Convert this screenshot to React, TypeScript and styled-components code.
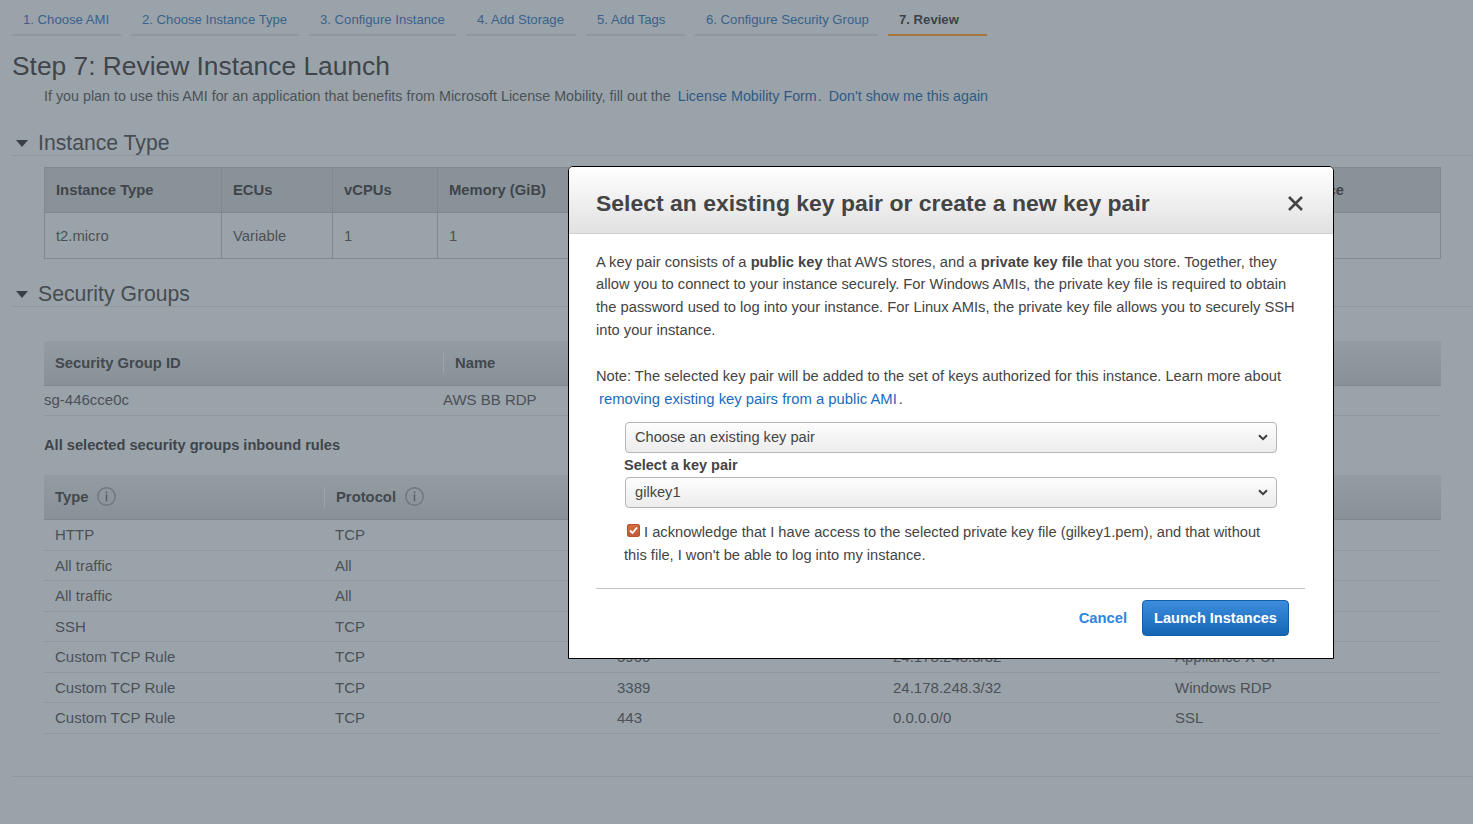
import React from "react";
import styled, { createGlobalStyle } from "styled-components";

const Global = createGlobalStyle`
  html, body { margin: 0; padding: 0; height: 100%; overflow: hidden; background: #9ba3aa; }
  body { font-family: "Liberation Sans", Arial, sans-serif; font-size: 15px; color: #42484d; }
  * { box-sizing: border-box; }
`;

const Page = styled.div`
  height: 824px;
  padding: 0 12px;
  overflow: hidden;
  background: #9ba3aa;
`;
const Tabs = styled.nav`
  display: flex;
  gap: 10px;
  height: 36px;
`;
const Tab = styled.div<{ $w: number; $active?: boolean }>`
  width: ${(p) => p.$w}px;
  height: 36px;
  padding: 12px 11px 0;
  font-size: 13.15px;
  line-height: 15px;
  white-space: nowrap;
  color: ${(p) => (p.$active ? "#3d4348" : "#38628a")};
  font-weight: ${(p) => (p.$active ? 700 : 400)};
  border-bottom: 2px solid ${(p) => (p.$active ? "#a8763c" : "#8f979e")};
`;
const Title = styled.h1`
  margin: 15px 0 0;
  font-size: 26.35px;
  line-height: 30px;
  font-weight: 400;
  color: #3f454a;
`;
const Notice = styled.p`
  margin: 7px 0 0 32px;
  font-size: 14.3px;
  line-height: 16px;
  color: #4b5258;
`;
const DimLink = styled.a<{ $ml?: number; $mr?: number }>`
  color: #2f5a84;
  margin-left: ${(p) => p.$ml ?? 0}px;
  margin-right: ${(p) => p.$mr ?? 0}px;
`;
const SectionHead = styled.div<{ $mt: number }>`
  display: flex;
  align-items: center;
  height: 29px;
  margin: ${(p) => p.$mt}px -12px 0 0;
  border-bottom: 1px solid #8f979e;
  font-size: 21.2px;
  color: #454c52;
  padding-top: 3px;
  gap: 10px;
`;
const Caret = styled.span`
  width: 0;
  height: 0;
  margin-left: 4px;
  margin-top: 1px;
  border-left: 6px solid transparent;
  border-right: 6px solid transparent;
  border-top: 7px solid #3a4045;
`;
const Indented = styled.div<{ $mt: number }>`
  margin: ${(p) => p.$mt}px 20px 0 32px;
  width: 1397px;
`;
const Table = styled.table<{ $boxed?: boolean }>`
  width: ${(p) => (p.$boxed ? 1396 : 1397)}px;
  table-layout: fixed;
  border-collapse: collapse;
  border: ${(p) => (p.$boxed ? "1px solid #81898f" : "none")};
`;
const BoxHead = styled.th`
  height: 45px;
  padding: 0 11px;
  text-align: left;
  font-size: 14.8px;
  font-weight: 700;
  color: #3f454a;
  background: #8a9299;
  border: 1px solid #81898f;
  white-space: nowrap;
`;
const BoxCell = styled.td`
  height: 46px;
  padding: 0 11px;
  font-size: 14.8px;
  color: #4b5157;
  border: 1px solid #81898f;
`;
const GradHead = styled.th<{ $sep?: boolean; $pl?: number; $h: number }>`
  position: relative;
  height: ${(p) => p.$h}px;
  padding: 0 0 0 ${(p) => p.$pl ?? 11}px;
  text-align: left;
  font-size: 14.8px;
  font-weight: 700;
  color: #42484d;
  white-space: nowrap;
  background: linear-gradient(#949ca3, #899198);
  border-bottom: 1px solid #7f878e;
  ${(p) =>
    p.$sep
      ? `&::before { content: ""; position: absolute; left: 0; top: 12px; bottom: 12px; width: 1px; background: #9da5ac; }`
      : ""}
`;
const PlainCell = styled.td`
  height: 30px;
  padding: 0 0 2px;
  font-size: 15px;
  color: #4b5157;
  border-bottom: 1px solid #8f979e;
`;
const RuleCell = styled.td`
  height: 30.5px;
  padding: 0 0 0 11px;
  font-size: 15px;
  color: #4b5157;
  border-bottom: 1px solid #8f979e;
`;
const SubHead = styled.div`
  margin: 21px 0 21px;
  font-size: 14.65px;
  line-height: 17px;
  font-weight: 700;
  color: #3f454a;
`;
const HeadInner = styled.span`
  display: inline-flex;
  align-items: center;
  gap: 9px;
`;
const BottomRule = styled.div`
  margin-top: 42px;
  margin-right: -12px;
  border-top: 1px solid #8f979e;
`;

const Modal = styled.div`
  position: fixed;
  left: 568px;
  top: 166px;
  width: 766px;
  height: 493px;
  background: #fff;
  border: 1px solid #000;
  border-radius: 5px 5px 0 0;
  overflow: hidden;
  color: #444;
`;
const ModalHead = styled.header`
  display: flex;
  align-items: center;
  justify-content: space-between;
  height: 67px;
  padding: 6px 30px 0 27px;
  background: linear-gradient(#ffffff, #e1e1e1);
  border-bottom: 1px solid #cfcfcf;
`;
const ModalTitle = styled.h2`
  margin: 0;
  font-size: 22.96px;
  line-height: 28px;
  font-weight: 700;
  color: #444;
  white-space: nowrap;
`;
const Close = styled.button`
  display: flex;
  padding: 0;
  border: 0;
  background: none;
`;
const ModalBody = styled.div`
  padding: 16.7px 28px 0 27px;
  font-size: 14.65px;
  line-height: 22.8px;
`;
const Para = styled.p<{ $size?: number }>`
  margin: 0 0 23.3px;
  font-size: ${(p) => p.$size ?? 14.65}px;
`;
const Blue = styled.a`
  color: #1a6bbd;
  font-size: 14.85px;
  margin: 0 2px 0 3px;
`;
const Form = styled.div`
  margin: -12px 0 0 28px;
  width: 653px;
`;
const Select = styled.div`
  display: flex;
  align-items: center;
  justify-content: space-between;
  margin-left: 1px;
  width: 652px;
  height: 31px;
  padding: 0 8px 0 9px;
  border: 1px solid #b5b5b5;
  border-radius: 4px;
  background: linear-gradient(#fdfdfd, #ececec);
  color: #444;
`;
const Label = styled.div`
  font-weight: 700;
  font-size: 14.5px;
  line-height: 24px;
  height: 24px;
`;
const Ack = styled.div`
  margin-top: 13px;
  line-height: 23px;
`;
const Check = styled.span`
  display: inline-flex;
  align-items: center;
  justify-content: center;
  vertical-align: 2px;
  width: 13px;
  height: 13px;
  margin: 0 0 0 3px;
  border-radius: 3px;
  background: linear-gradient(#d8703f, #c2593a);
  box-shadow: inset 0 0 0 1px #b5532f;
`;
const Footer = styled.footer`
  display: flex;
  align-items: center;
  justify-content: flex-end;
  gap: 15px;
  margin: 21px 0 0;
  padding: 11px 16px 0 0;
  border-top: 1px solid #c4c4c4;
`;
const Cancel = styled.a`
  margin-top: 1px;
  font-weight: 700;
  font-size: 14.75px;
  line-height: 17px;
  color: #2f86dc;
`;
const Launch = styled.button`
  width: 147px;
  height: 36px;
  padding: 0;
  border: 1px solid #125fa8;
  border-radius: 4px;
  background: linear-gradient(#3c8dde, #1565b5);
  color: #fff;
  font: 700 14.55px "Liberation Sans", Arial, sans-serif;
`;

const Info = () => (
  <svg width="19" height="19" viewBox="0 0 19 19" fill="none" aria-hidden>
    <circle cx="9.5" cy="9.5" r="8.7" stroke="#6f777e" strokeWidth="1.4" />
    <rect x="8.8" y="4.5" width="1.4" height="1.7" fill="#555c62" />
    <rect x="8.8" y="7.3" width="1.4" height="7" fill="#555c62" />
  </svg>
);
const Chevron = () => (
  <svg width="10" height="7" viewBox="0 0 10 7" fill="none" aria-hidden>
    <path d="M1 1.2 L5 5.2 L9 1.2" stroke="#3c3c3c" strokeWidth="2" />
  </svg>
);

const tabs: [string, number, boolean?][] = [
  ["1. Choose AMI", 109],
  ["2. Choose Instance Type", 168],
  ["3. Configure Instance", 147],
  ["4. Add Storage", 110],
  ["5. Add Tags", 99],
  ["6. Configure Security Group", 183],
  ["7. Review", 99, true],
];
const rules = [
  ["HTTP", "TCP", "80", "0.0.0.0/0", "HTTP"],
  ["All traffic", "All", "All", "0.0.0.0/0", ""],
  ["All traffic", "All", "All", "24.178.248.3/32", ""],
  ["SSH", "TCP", "22", "24.178.248.3/32", "SSH"],
  ["Custom TCP Rule", "TCP", "5900", "24.178.248.3/32", "Appliance X-UI"],
  ["Custom TCP Rule", "TCP", "3389", "24.178.248.3/32", "Windows RDP"],
  ["Custom TCP Rule", "TCP", "443", "0.0.0.0/0", "SSL"],
];

export default function App() {
  return (
    <>
      <Global />
      <Page>
        <Tabs>
          {tabs.map(([t, w, a]) => (
            <Tab key={t} $w={w} $active={a}>{t}</Tab>
          ))}
        </Tabs>
        <Title>Step 7: Review Instance Launch</Title>
        <Notice>
          If you plan to use this AMI for an application that benefits from Microsoft License Mobility, fill out the{" "}
          <DimLink $ml={3} $mr={1}>License Mobility Form</DimLink>.{" "}
          <DimLink $ml={3}>Don't show me this again</DimLink>
        </Notice>

        <SectionHead $mt={23}><Caret />Instance Type</SectionHead>
        <Indented $mt={11}>
          <Table $boxed>
            <colgroup>
              {[177, 111, 105, 190, 276, 276, 261].map((w, i) => <col key={i} width={w} />)}
            </colgroup>
            <thead>
              <tr>
                {["Instance Type", "ECUs", "vCPUs", "Memory (GiB)", "Instance Storage (GB)", "EBS-Optimized Available", "Network Performance"].map((h) => (
                  <BoxHead key={h}>{h}</BoxHead>
                ))}
              </tr>
            </thead>
            <tbody>
              <tr>
                {["t2.micro", "Variable", "1", "1", "EBS only", "-", "Low to Moderate"].map((c, i) => (
                  <BoxCell key={i}>{c}</BoxCell>
                ))}
              </tr>
            </tbody>
          </Table>
        </Indented>

        <SectionHead $mt={19}><Caret />Security Groups</SectionHead>
        <Indented $mt={34}>
          <Table>
            <colgroup><col width={399} /><col width={998} /></colgroup>
            <thead>
              <tr>
                <GradHead $h={44}>Security Group ID</GradHead>
                <GradHead $h={44} $sep $pl={12}>Name</GradHead>
              </tr>
            </thead>
            <tbody>
              <tr>
                <PlainCell>sg-446cce0c</PlainCell>
                <PlainCell>AWS BB RDP</PlainCell>
              </tr>
            </tbody>
          </Table>
          <SubHead>All selected security groups inbound rules</SubHead>
          <Table>
            <colgroup>
              {[280, 282, 276, 282, 277].map((w, i) => <col key={i} width={w} />)}
            </colgroup>
            <thead>
              <tr>
                <GradHead $h={45}><HeadInner>Type <Info /></HeadInner></GradHead>
                <GradHead $h={45} $sep $pl={12}><HeadInner>Protocol <Info /></HeadInner></GradHead>
                <GradHead $h={45} $sep>Port Range</GradHead>
                <GradHead $h={45} $sep>Source</GradHead>
                <GradHead $h={45} $sep>Description</GradHead>
              </tr>
            </thead>
            <tbody>
              {rules.map((r, i) => (
                <tr key={i}>
                  {r.map((c, j) => <RuleCell key={j}>{c}</RuleCell>)}
                </tr>
              ))}
            </tbody>
          </Table>
        </Indented>
        <BottomRule />
      </Page>

      <Modal role="dialog">
        <ModalHead>
          <ModalTitle>Select an existing key pair or create a new key pair</ModalTitle>
          <Close aria-label="Close">
            <svg width="15" height="15" viewBox="0 0 15 15" fill="none" aria-hidden>
              <path d="M1 1 L14 14 M14 1 L1 14" stroke="#444" strokeWidth="2.6" />
            </svg>
          </Close>
        </ModalHead>
        <ModalBody>
          <Para $size={14.72}>
            A key pair consists of a <b>public key</b> that AWS stores, and a <b>private key file</b> that you store. Together, they allow you to connect to your instance securely. For Windows AMIs, the private key file is required to obtain the password used to log into your instance. For Linux AMIs, the private key file allows you to securely SSH into your instance.
          </Para>
          <Para>
            Note: The selected key pair will be added to the set of keys authorized for this instance. Learn more about
            <br />
            <Blue>removing existing key pairs from a public AMI</Blue>.
          </Para>
          <Form>
            <Select>Choose an existing key pair<Chevron /></Select>
            <Label>Select a key pair</Label>
            <Select>gilkey1<Chevron /></Select>
            <Ack>
              <Check>
                <svg width="9" height="9" viewBox="0 0 9 9" fill="none" aria-hidden>
                  <path d="M1 4.5 L3.5 7 L8 1.5" stroke="#fff" strokeWidth="1.8" />
                </svg>
              </Check>
              {" "}I acknowledge that I have access to the selected private key file (gilkey1.pem), and that without this file, I won't be able to log into my instance.
            </Ack>
          </Form>
          <Footer>
            <Cancel>Cancel</Cancel>
            <Launch>Launch Instances</Launch>
          </Footer>
        </ModalBody>
      </Modal>
    </>
  );
}
